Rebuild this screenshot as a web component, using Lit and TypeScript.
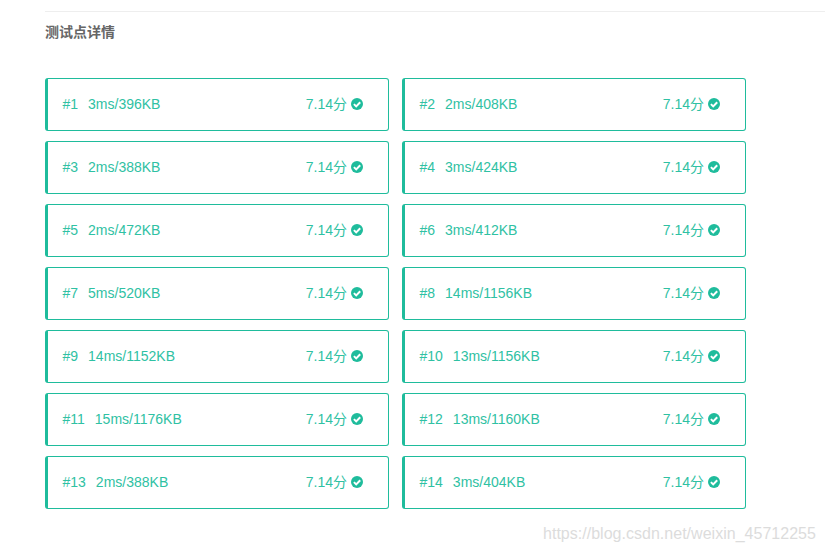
import { LitElement, html, css, svg } from "lit";
import { customElement } from "lit/decorators.js";

const rows: [string, string][] = [
  ["#1", "3ms/396KB"], ["#2", "2ms/408KB"], ["#3", "2ms/388KB"], ["#4", "3ms/424KB"],
  ["#5", "2ms/472KB"], ["#6", "3ms/412KB"], ["#7", "5ms/520KB"], ["#8", "14ms/1156KB"],
  ["#9", "14ms/1152KB"], ["#10", "13ms/1156KB"], ["#11", "15ms/1176KB"], ["#12", "13ms/1160KB"],
  ["#13", "2ms/388KB"], ["#14", "3ms/404KB"],
];

const check = svg`<svg class="icon" viewBox="0 0 12 12" width="12" height="12"><circle cx="6" cy="6" r="6" fill="#1fbc9c"/><path d="M2.9 6.1 5.2 8.4 9.2 4.2" fill="none" stroke="#fff" stroke-width="2"/></svg>`;

@customElement("app-root")
export class AppRoot extends LitElement {
  static styles = css`
    :host { display: block; position: relative; width: 825px; height: 551px; overflow: hidden; background: #fff;
      font-family: "Liberation Sans", "Noto Sans CJK SC", sans-serif; }
    .page { padding: 11px 0 0 45px; }
    .rule { height: 1px; background: #eeeeee; }
    h2 { margin: 12px 0 0; font-size: 14px; line-height: 16px; font-weight: 700; color: #666; }
    .grid { display: grid; grid-template-columns: repeat(2, 344px); column-gap: 13px; row-gap: 10px; margin-top: 38px; }
    .card { box-sizing: border-box; height: 53px; display: flex; align-items: center; border: 1px solid #1fbc9c;
      border-left-width: 3px; border-radius: 3px; padding: 0 25px 2px 14.5px; color: #2fc1a3; font-size: 14px; line-height: 16px; }
    .id { margin-right: 10px; }
    .score { margin-left: auto; display: flex; align-items: center; gap: 4px; }
    .icon { display: block; }
    .mark { position: absolute; left: 543px; bottom: 8px; font-size: 16px; line-height: 18px; letter-spacing: 0.02px; color: #dcdcdc; }
  `;
  render() {
    return html`<div class="page">
        <div class="rule"></div>
        <h2>测试点详情</h2>
        <div class="grid">
          ${rows.map(([id, val]) => html`<div class="card">
            <span class="id">${id}</span><span>${val}</span>
            <span class="score">7.14分${check}</span>
          </div>`)}
        </div>
      </div>
      <div class="mark">https://blog.csdn.net/weixin_45712255</div>`;
  }
}
